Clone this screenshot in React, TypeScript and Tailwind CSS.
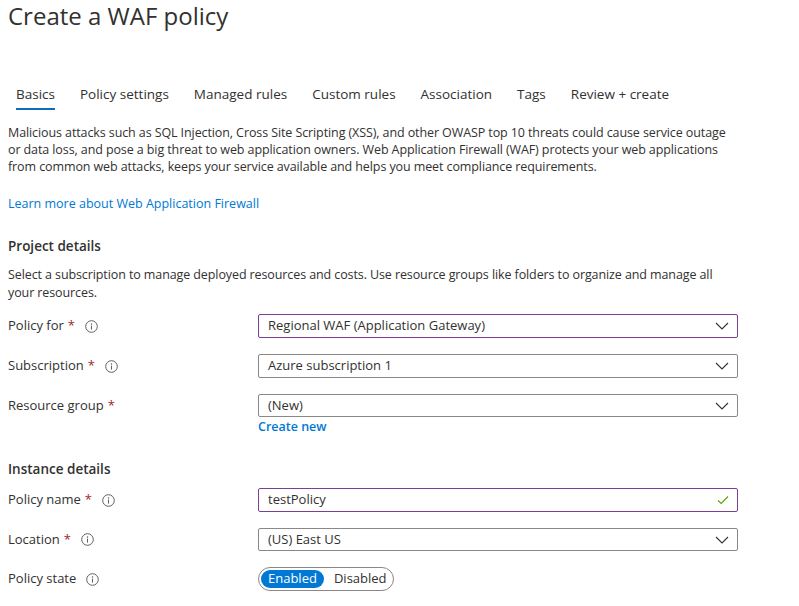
import React from "react";

const font = { fontFamily: '"Open Sans", "Noto Sans", sans-serif' };

function Info() {
  return (
    <svg width="13" height="13" viewBox="0 0 13 13" className="ml-[10px] shrink-0">
      <circle cx="6.5" cy="6.5" r="5.8" fill="none" stroke="#605e5c" strokeWidth="1" />
      <circle cx="6.5" cy="3.9" r="0.75" fill="#605e5c" />
      <line x1="6.5" y1="5.6" x2="6.5" y2="9.6" stroke="#605e5c" strokeWidth="1" />
    </svg>
  );
}

function Chevron() {
  return (
    <svg width="14" height="8" viewBox="0 0 14 8" className="shrink-0">
      <path d="M1 1 L7 7 L13 1" fill="none" stroke="#323130" strokeWidth="1.1" />
    </svg>
  );
}

function Check() {
  return (
    <svg width="12" height="10" viewBox="0 0 12 10" className="shrink-0">
      <path d="M1 5.5 L4.2 8.5 L11 1.5" fill="none" stroke="#57a300" strokeWidth="1.1" />
    </svg>
  );
}

function Label({ text, req, info }: { text: string; req?: boolean; info?: boolean }) {
  return (
    <div className="flex items-center text-[13px] text-[#323130] pl-2 w-[258px] shrink-0">
      <span>{text}</span>
      {req && <span className="text-[#a4262c] ml-[4px]">*</span>}
      {info && <Info />}
    </div>
  );
}

function Select({ value, focus, check }: { value: string; focus?: boolean; check?: boolean }) {
  return (
    <div
      className={
        "w-[480px] h-full flex items-center justify-between pl-[9px] pr-[8px] rounded-[2px] border text-[13px] text-[#323130] " +
        (focus ? "border-[#7b3f98]" : "border-[#8a8886]")
      }
    >
      <span>{value}</span>
      {check ? <Check /> : <Chevron />}
    </div>
  );
}

export default function App() {
  const tabs = ["Basics", "Policy settings", "Managed rules", "Custom rules", "Association", "Tags", "Review + create"];
  return (
    <div className="w-[799px] h-[606px] bg-white overflow-hidden text-[#323130]" style={font}>
      <div className="pl-2 h-[32px] flex items-center text-[24px] leading-[32px] text-[#323130]">Create a WAF policy</div>

      <div className="flex pl-4 mt-[51px] gap-[25px] text-[13.5px] text-[#323130]">
        {tabs.map((t, i) => (
          <div key={t} className="flex flex-col">
            <span className="leading-[22px]">{t}</span>
            <div className={"h-[2px] mt-[3px] " + (i === 0 ? "bg-[#0f6cbd]" : "bg-transparent")} />
          </div>
        ))}
      </div>

      <p className="pl-2 pr-[60px] mt-[14px] text-[12.5px] leading-[17px] tracking-[-0.1px]">
        Malicious attacks such as SQL Injection, Cross Site Scripting (XSS), and other OWASP top 10 threats could cause service outage or data loss, and pose a big threat to web application owners. Web Application Firewall (WAF) protects your web applications from common web attacks, keeps your service available and helps you meet compliance requirements.
      </p>

      <div className="pl-2 mt-[20px] text-[12.5px] leading-[17px] text-[#0078d4]">Learn more about Web Application Firewall</div>

      <div className="pl-2 mt-[24px] text-[13.5px] leading-[20px] font-semibold">Project details</div>

      <p className="pl-2 pr-[60px] mt-[10px] text-[12.5px] leading-[18px] tracking-[-0.1px]">
        Select a subscription to manage deployed resources and costs. Use resource groups like folders to organize and manage all your resources.
      </p>

      <div className="flex flex-col mt-[12px]">
        <div className="flex items-center h-[24px]">
          <Label text="Policy for" req info />
          <Select value="Regional WAF (Application Gateway)" focus />
        </div>
        <div className="flex items-center h-[24px] mt-[16px]">
          <Label text="Subscription" req info />
          <Select value="Azure subscription 1" />
        </div>
        <div className="flex items-center h-[23px] mt-[16px]">
          <Label text="Resource group" req />
          <Select value="(New)" />
        </div>
        <div className="pl-[258px] text-[12.5px] leading-[18px] font-semibold text-[#0078d4] mt-[1px]">Create new</div>
      </div>

      <div className="pl-2 mt-[23px] text-[13.5px] leading-[20px] font-semibold">Instance details</div>

      <div className="flex flex-col mt-[9px]">
        <div className="flex items-center h-[24px]">
          <Label text="Policy name" req info />
          <Select value="testPolicy" focus check />
        </div>
        <div className="flex items-center h-[23px] mt-[16px]">
          <Label text="Location" req info />
          <Select value="(US) East US" />
        </div>
        <div className="flex items-center h-[24px] mt-[16px]">
          <Label text="Policy state" info />
          <div className="flex items-center h-[24px] w-[136px] border border-[#8a8886] rounded-full p-[2px] text-[13px]">
            <span className="bg-[#0078d4] text-white rounded-full h-[18px] px-[7px] flex items-center">Enabled</span>
            <span className="px-[10px] text-[#323130]">Disabled</span>
          </div>
        </div>
      </div>
    </div>
  );
}
